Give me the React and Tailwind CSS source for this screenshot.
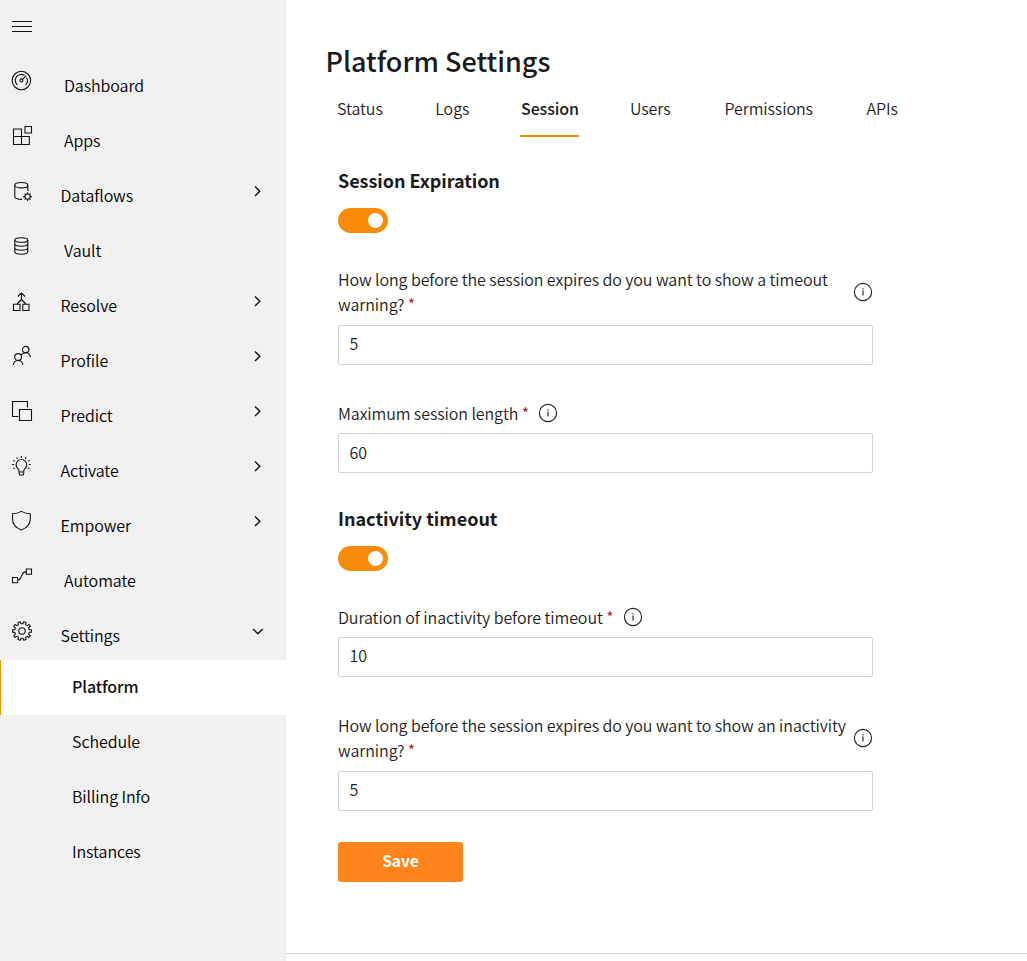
import React from "react";

function gearPath(cx, cy, outer, inner, teeth) {
  const step = (Math.PI * 2) / teeth;
  const point = (r, a) => `${(cx + r * Math.cos(a)).toFixed(2)} ${(cy + r * Math.sin(a)).toFixed(2)}`;
  let d = "";
  for (let i = 0; i < teeth; i++) {
    const a = i * step - Math.PI / 2 + step / 2;
    d += `${i ? "L" : "M"}${point(inner, a - step * 0.3)}L${point(outer, a - step * 0.2)}`;
    d += `L${point(outer, a + step * 0.2)}L${point(inner, a + step * 0.3)}`;
  }
  return d + "Z";
}

const icons = {
  dashboard: (
    <>
      <circle cx="10.4" cy="10.5" r="9.2" />
      <path d="M6.4 15A6 6 0 0 1 13.4 5.3M15.6 7.8A6 6 0 0 1 14.6 15M11.5 9.3L15.2 5.6" />
      <circle cx="10.4" cy="10.4" r="1.5" />
    </>
  ),
  apps: <path d="M2.5 4H10.5V19.5H2.5ZM2.5 11.5H18.3V19.5H10.5M14 1.5H20.5V8H14Z" />,
  dataflows: (
    <>
      <ellipse cx="10.3" cy="5.2" rx="6.5" ry="2.7" />
      <path d="M3.8 5.2V16.8C3.8 18.4 6.5 19.4 11 19.4M16.8 5.2V11" />
      <circle cx="16.6" cy="16.6" r="2.6" />
      <path d="M16.6 12.3V14M16.6 19.2V20.9M12.3 16.6H14M19.2 16.6H20.9M13.6 13.6L14.7 14.7M18.5 18.5L19.6 19.6M13.6 19.6L14.7 18.5M18.5 14.7L19.6 13.6" />
    </>
  ),
  vault: (
    <>
      <ellipse cx="10.3" cy="5" rx="6.5" ry="2.3" />
      <path d="M3.8 5V16.8C3.8 20 16.8 20 16.8 16.8V5M3.8 8.8C3.8 12 16.8 12 16.8 8.8M3.8 12.8C3.8 16 16.8 16 16.8 12.8" />
    </>
  ),
  resolve: (
    <path d="M2.5 14.3H9V20.5H2.5ZM11.8 14.3H18V20.5H11.8ZM10.4 3V9.5M6.8 6.5L10.4 3L14 6.5M10.4 9.5L6 14M10.4 9.5L15 14" />
  ),
  profile: (
    <>
      <circle cx="7.1" cy="12" r="3.4" />
      <circle cx="14.7" cy="4.6" r="3.2" />
      <path d="M2.3 19.8C2.8 17 4.6 15.5 7.1 15.5S11.4 17 12 19.8M10.2 9.8C11.2 8.5 12.8 7.8 14.7 7.8C17.4 7.8 19 9.3 19.5 12.2" />
    </>
  ),
  predict: <path d="M7.5 16.5H1.5V1.5H16.5V7.5M8.5 9.5H20.5V20.5H8.5Z" />,
  activate: (
    <>
      <path d="M8 17.8V15.5C8 14.2 5.1 12.8 5.1 9.8A5.3 5.3 0 0 1 15.7 9.8C15.7 12.8 12.8 14.2 12.8 15.5V17.8M8 17H12.8M8 17.8L8.6 20H12.2L12.8 17.8" />
      <path d="M10.4 1V3M5.6 2.4L6.5 4M15.2 2.4L14.3 4M2.2 5.4L3.7 6.3M18.6 5.4L17.1 6.3M1 9.5H3M17.8 9.5H19.8M2.2 13.9L3.7 13M18.6 13.9L17.1 13" />
    </>
  ),
  empower: (
    <path d="M1.5 3.8C5 3.8 8 2.8 10.3 1.4C12.6 2.8 15.8 3.8 19.3 3.8V9C19.3 14 15.5 18 10.3 20C5.2 18 1.5 14 1.5 9Z" />
  ),
  automate: <path d="M1.5 12.5H6.7V17.7H1.5ZM15.3 4H20.5V9.2H15.3ZM6.7 15.2C9.8 15.2 9.2 13.5 10.6 10.8C12 8 12 6.6 15.3 6.6" />,
  settings: (
    <>
      <path strokeLinejoin="round" d={gearPath(11, 11, 9.5, 7.3, 10)} />
      <circle cx="11" cy="11" r="3.2" />
    </>
  ),
};

const navItems = [
  { label: "Dashboard", icon: "dashboard" },
  { label: "Apps", icon: "apps" },
  { label: "Dataflows", icon: "dataflows", expandable: true },
  { label: "Vault", icon: "vault" },
  { label: "Resolve", icon: "resolve", expandable: true },
  { label: "Profile", icon: "profile", expandable: true },
  { label: "Predict", icon: "predict", expandable: true },
  { label: "Activate", icon: "activate", expandable: true },
  { label: "Empower", icon: "empower", expandable: true },
  { label: "Automate", icon: "automate" },
  { label: "Settings", icon: "settings", expandable: true, open: true },
];

const subItems = ["Platform", "Schedule", "Billing Info", "Instances"];

function NavRow({ label, icon, expandable, open }) {
  return (
    <li className="flex h-[55px] items-start pl-[11px]">
      <svg className="mt-[15px] size-[22px] shrink-0" viewBox="0 0 22 22" fill="none" stroke="#111" strokeWidth="1.1">
        {icons[icon]}
      </svg>
      <span className={`${expandable ? "ml-[27.5px]" : "ml-[31px]"} mt-[18px] flex-1 leading-6`}>{label}</span>
      {expandable && (
        <svg className="mt-[19px] mr-[21px] size-[14px]" viewBox="0 0 14 14" fill="none" stroke="#111" strokeWidth="1.4">
          <path d={open ? "M2 5L6.9 9.7L11.8 5" : "M4 2.5L8.8 7.3L4 12.1"} />
        </svg>
      )}
    </li>
  );
}

function Sidebar() {
  return (
    <aside className="flex w-[286px] shrink-0 flex-col bg-[#f1f1f1] text-black shadow-[inset_-3px_0_3px_-2px_#e9e9e9]">
      <div className="h-[55px] pt-[21px] pl-[12px]">
        <div className="flex w-[20px] flex-col gap-[4px]">
          <div className="h-px bg-[#111]" />
          <div className="h-px bg-[#111]" />
          <div className="h-px bg-[#111]" />
        </div>
      </div>
      <ul>
        {navItems.map((item) => (
          <NavRow key={item.label} {...item} />
        ))}
      </ul>
      <ul>
        {subItems.map((label, i) => (
          <li
            key={label}
            className={
              i === 0
                ? "flex h-[55px] items-center border-l border-[#f88c06] bg-white pb-[3px] pl-[71px] font-medium text-[#111]"
                : "flex h-[55px] items-center pb-[3px] pl-[72px]"
            }
          >
            {label}
          </li>
        ))}
      </ul>
    </aside>
  );
}

function InfoIcon({ className }) {
  return (
    <svg className={`size-[20px] shrink-0 ${className}`} viewBox="0 0 20 20" fill="none" stroke="#222" strokeWidth="1.15">
      <circle cx="10" cy="10" r="8.6" />
      <path d="M10 8.6V13.5M10 6.2V7.4" />
    </svg>
  );
}

function Toggle() {
  return (
    <div className="flex h-[25px] w-[50px] items-center justify-end rounded-full bg-[#f88c06] pr-[5px]">
      <div className="size-[15px] rounded-full bg-white" />
    </div>
  );
}

function Field({ lines, value, iconClass, className, labelClass = "", inputClass = "pb-[4px]" }) {
  return (
    <div className={className}>
      <div className="flex">
        <label className={`leading-[25px] whitespace-nowrap ${labelClass}`}>
          {lines.map((line, i) => (
            <span key={line} className="block">
              {line}
              {i === lines.length - 1 && <span className="text-[#b01020]"> *</span>}
            </span>
          ))}
        </label>
        <InfoIcon className={iconClass} />
      </div>
      <input
        readOnly
        value={value}
        className={`mt-[7px] block h-[40px] w-[535px] rounded-[2px] border border-[#d0d2da] px-[10.5px] outline-none ${inputClass}`}
      />
    </div>
  );
}

const tabs = [
  { label: "Status", className: "w-[98.3px]" },
  { label: "Logs", className: "w-[85.7px]" },
  { label: "Session", className: "w-[109px]", active: true },
  { label: "Users", className: "w-[94.5px]" },
  { label: "Permissions", className: "w-[142px]" },
  { label: "APIs", className: "w-[60px]" },
];

export default function App() {
  return (
    <div className="flex h-[961px] w-[1027px] overflow-hidden bg-white font-['Noto_Sans_CJK_SC',sans-serif] text-[16px] font-[350] tracking-[-0.08px] text-[#1c1c1c]">
      <Sidebar />
      <div className="flex flex-1 flex-col">
        <main className="h-[953px] pl-[52px]">
          <h1 className="-ml-[12.5px] h-[82px] pt-[41px] text-[27px] leading-[40px] font-medium tracking-normal text-[#1a1a1a]">
            Platform Settings
          </h1>
          <nav className="-ml-[1px] flex h-[55px]">
            {tabs.map((tab) => (
              <div key={tab.label} className={`${tab.className} shrink-0`}>
                <span
                  className={
                    tab.active
                      ? "-ml-px inline-block h-[55px] w-[59px] border-b-2 border-[#f88c06] px-px pt-[14px] leading-6 font-medium whitespace-nowrap text-[#1a1a1a]"
                      : "inline-block pt-[14px] leading-6"
                  }
                >
                  {tab.label}
                </span>
              </div>
            ))}
          </nav>
          <h2 className="mt-[28px] mb-[13px] text-[18px] leading-[30px] font-bold tracking-[-0.05px] text-[#1a1a1a]">
            Session Expiration
          </h2>
          <Toggle />
          <Field
            className="mt-[34px]"
            lines={["How long before the session expires do you want to show a timeout", "warning?"]}
            value="5"
            labelClass="mb-px w-[515px]"
            iconClass="mt-[15px]"
          />
          <Field
            className="mt-[36px]"
            lines={["Maximum session length"]}
            value="60"
            iconClass="mt-[2px] ml-[9px]"
            inputClass="pb-[3px]"
          />
          <h2 className="mt-[30px] mb-[13px] text-[18px] leading-[30px] font-bold tracking-normal text-[#1a1a1a]">
            Inactivity timeout
          </h2>
          <Toggle />
          <Field className="mt-[34px]" lines={["Duration of inactivity before timeout"]} value="10" iconClass="mt-[2px] ml-[9px]" />
          <Field
            className="mt-[36px]"
            lines={["How long before the session expires do you want to show an inactivity", "warning?"]}
            value="5"
            labelClass="mb-px w-[515px]"
            iconClass="mt-[15px]"
          />
          <button className="mt-[31px] block h-[40px] w-[125px] rounded-[3px] bg-[#ff851b] pb-[2px] text-[15.5px] font-bold tracking-normal text-white">
            Save
          </button>
        </main>
        <footer className="flex-1 border-t border-[#d0d2da]" />
      </div>
    </div>
  );
}
